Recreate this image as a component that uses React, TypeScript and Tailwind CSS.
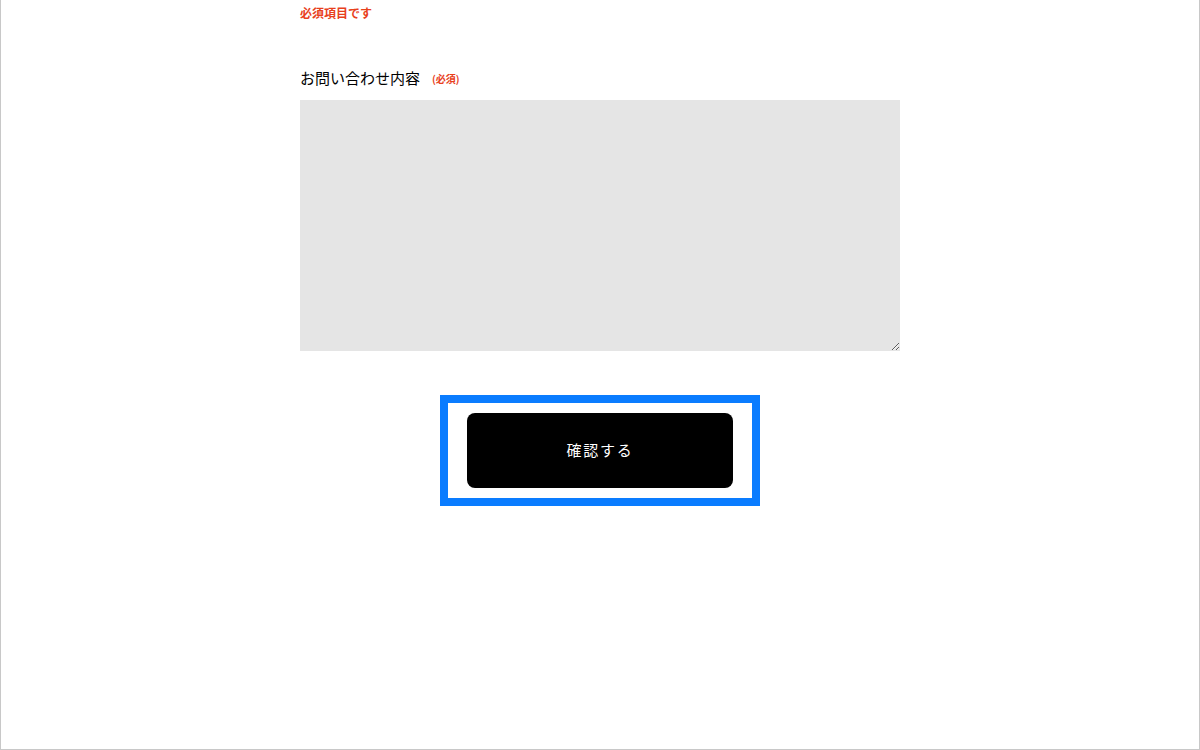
export default function App() {
  return (
    <div className="h-[750px] w-[1200px] overflow-hidden border-x border-b border-[#c8c8c8] bg-white font-['Noto_Sans_CJK_JP',sans-serif]">
      <div className="mx-auto w-[600px] pt-[4px]">
        <p className="text-[12px] font-bold leading-[18px] text-[#e8401c]">必須項目です</p>

        <div className="mt-[46px] flex items-center">
          <span className="text-[15px] leading-[20px] text-black">お問い合わせ内容</span>
          <span className="ml-[12px] text-[10px] font-bold text-[#e8401c]">(必須)</span>
        </div>

        <textarea className="mt-[12px] block h-[251px] w-[600px] resize-y bg-[#e5e5e5] outline-none" />

        <div className="mt-[44px] flex justify-center">
          <div className="border-[8px] border-[#0a7cff] bg-white px-[19px] py-[10px]">
            <button className="flex h-[75px] w-[266px] items-center justify-center rounded-[8px] bg-black text-[15px] tracking-[0.12em] text-white">
              確認する
            </button>
          </div>
        </div>
      </div>
    </div>
  );
}
